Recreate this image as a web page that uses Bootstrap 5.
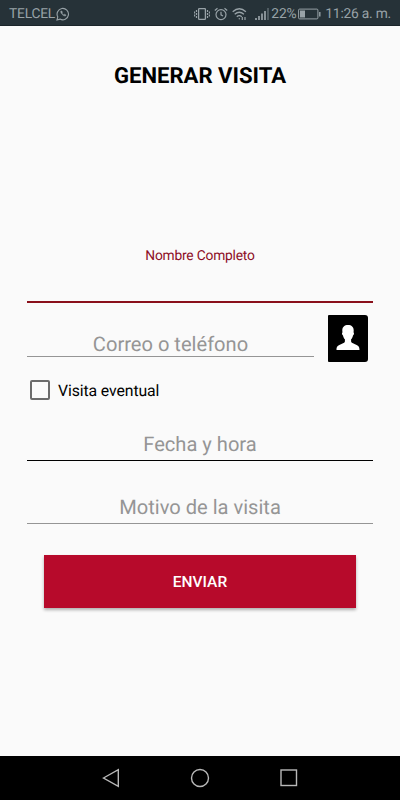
<!DOCTYPE html>
<html lang="es">
<head>
<meta charset="utf-8">
<meta name="viewport" content="width=device-width, initial-scale=1">
<title>Generar visita</title>
<link rel="stylesheet" href="https://cdn.jsdelivr.net/npm/bootstrap@5.3.0/dist/css/bootstrap.min.css">
<style>
body{font-family:Roboto,"Liberation Sans",sans-serif;background:#fafafa;color:#000;height:800px;overflow:hidden;text-rendering:geometricPrecision}
svg{display:block;flex:none}
.status-bar{height:26px;background:#263238;color:#98a2a7;font-size:13.8px;letter-spacing:-.22px;line-height:26px;padding:2px 9px 0;border-bottom:1px solid #1b252a}
.screen-title{font-size:22.1px;line-height:28px;font-weight:700;margin-top:36px}
.form-area{padding:0 27px}
.name-field{margin-top:156px;height:57px;border-bottom:2px solid #8a101b;color:#8e0e26;font-size:13.8px;letter-spacing:-.2px;line-height:20px}
.hint-field{font-size:20.1px;line-height:24px;color:#959595;border-bottom:1px solid #959595}
.mail-field{width:287px;height:43px;padding-top:18px}
.mail-row{padding-top:11px;height:59px}
.date-field{height:37px;padding-top:8px;margin-top:15px;border-color:#000}
.reason-field{height:37px;padding-top:8px;margin-top:26px}
.contact-btn{width:40px;height:47px;background:#000;border-radius:1px 3px 3px 1px;margin:1px 0 0 14px;border:0}
.contact-btn svg{margin-bottom:2px}
.check-row{height:38px;font-size:15.8px;letter-spacing:-.1px;padding:0 3px;margin-top:9px}
.check-box{width:20px;height:20px;border:2px solid #6b6b6b;border-radius:2px}
.check-label{padding-top:1px}
.send-btn{width:312px;height:53px;margin:31px auto 0;padding:8px 0 6px;background:#b70a2b;color:#fff;font-size:15.5px;font-weight:500;border:0;box-shadow:0 2px 3px rgba(0,0,0,.3)}
.nav-keys{height:44px;background:#000}
.gap-carrier{margin-left:1px}
.gap-signal{margin-left:8px}
.gap-pct{margin-left:2px}
.gap-batt{margin-left:2px}
.gap-clock{margin-left:4px}
</style>
</head>
<body class="d-flex flex-column">
<header class="status-bar d-flex align-items-center">
  <span>TELCEL</span>
  <svg class="gap-carrier" width="14" height="14" viewBox="0 0 14 14" fill="none" stroke="#98a2a7"><path d="M1 13l.8-3.1A5.7 5.7 0 1 1 4 12.1z" stroke-width="1.1"/><path d="M4.800 4.100c-.8 1.700 2.400 5.300 4.700 5l.5-1.200-1.500-.7-.8.6C6.900 7.400 6.300 6.800 6 6.100l.5-.8-.7-1.400z" fill="#98a2a7" stroke-width=".4"/></svg>
  <div class="d-flex align-items-center ms-auto">
    <svg width="16" height="14" viewBox="0 0 16 14" fill="none" stroke="#98a2a7"><rect x="4.600" y="1.600" width="6.800" height="10.800" rx=".7" stroke-width="1.300"/><path d="M2.500 3v8M13.500 3v8M.6 4.500v5M15.400 4.500v5" stroke-width="1.200" stroke-dasharray="2 1"/></svg>
    <svg class="ms-1" width="14" height="14" viewBox="0 0 14 14" fill="none" stroke="#98a2a7"><circle cx="7" cy="7.600" r="5" stroke-width="1.200"/><path d="M7 4.800v3l2 1.200M.8 3.500l2.700-2.300M13.200 3.500l-2.700-2.300" stroke-width="1.200"/></svg>
    <svg class="ms-1" width="15" height="14" viewBox="0 0 15 14" fill="none" stroke="#98a2a7" stroke-width="1.300"><path d="M.7 4.700q6.600-5.800 13.200 0M2.700 7.300q4.600-4 9.200 0M4.800 9.700q2.500-2 5 0"/><circle cx="7.300" cy="11.700" r=".7" fill="#98a2a7" stroke="none"/><path d="M10.300 10v3M13 10v3" stroke-width="1.200"/></svg>
    <svg class="gap-signal" width="14" height="14" viewBox="0 0 14 14" stroke="#98a2a7" stroke-width="1.700"><path d="M1 13v-2M4 13V9M7 13V6.500M10 13V4"/><path d="M13 13V1" stroke="#58646a"/></svg>
    <span class="gap-pct">22%</span>
    <svg class="gap-batt" width="23" height="12" viewBox="0 0 23 12" fill="none" stroke="#98a2a7"><rect x=".6" y="1.100" width="19.300" height="9.800" rx="1"/><path d="M2 2.500h5v7H2z" fill="#98a2a7" stroke="none"/><path d="M21.800 4v4.500" stroke-width="1.400"/></svg>
    <span class="gap-clock">11:26 a. m.</span>
  </div>
</header>
<main class="form-area flex-grow-1 text-center">
  <h1 class="screen-title mb-0">GENERAR VISITA</h1>
  <div class="name-field">Nombre Completo</div>
  <div class="mail-row d-flex align-items-start">
    <div class="hint-field mail-field">Correo o teléfono</div>
    <button class="contact-btn d-flex align-items-center justify-content-center p-0" type="button" aria-label="Contactos">
      <svg width="24" height="25" viewBox="0 0 24 25" fill="#fff"><path d="M12 0c3.500 0 5.700 2 5.700 5.400 0 .8-.1 1.300-.2 1.900.9.500.5 2.800-.5 3.200-.4 1.900-1 3-1.900 3.800v2.200c.4 1.500 1.700 1.800 3.900 2.700 3.300 1.300 4.500 2.300 4.500 5.800H.5c0-3.500 1.200-4.500 4.500-5.800 2.200-.9 3.500-1.200 3.900-2.700v-2.200C8 13.500 7.400 12.400 7 10.500c-1-.4-1.400-2.700-.5-3.200-.1-.6-.2-1.100-.2-1.900C6.300 2 8.500 0 12 0z"/></svg>
    </button>
  </div>
  <div class="check-row d-flex align-items-center gap-2"><span class="check-box"></span><span class="check-label">Visita eventual</span></div>
  <div class="hint-field date-field">Fecha y hora</div>
  <div class="hint-field reason-field">Motivo de la visita</div>
  <button class="btn send-btn d-block rounded-0" type="button">ENVIAR</button>
</main>
<nav class="nav-keys d-flex justify-content-center align-items-center">
  <svg width="200" height="24" viewBox="0 0 200 24" fill="none" stroke="#b8b8b8" stroke-width="1.400"><path d="M3.500 12L18.300 3.700v16.600z"/><circle cx="100" cy="12" r="8.500"/><rect x="181" y="4" width="15.500" height="15.500"/></svg>
</nav>
<script src="https://cdn.jsdelivr.net/npm/bootstrap@5.3.0/dist/js/bootstrap.bundle.min.js"></script>
</body>
</html>
